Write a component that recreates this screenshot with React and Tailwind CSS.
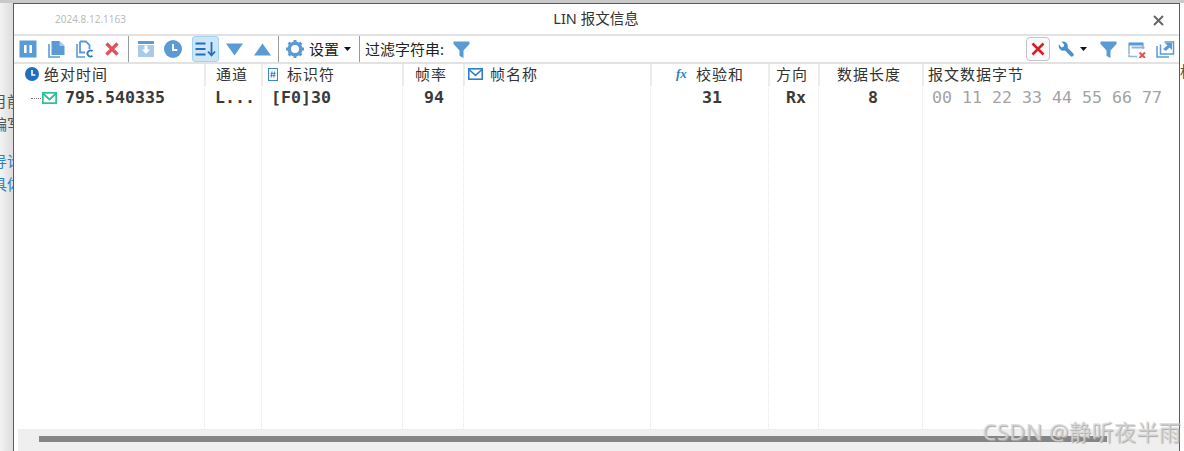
const cjk = '"Noto Sans", "Noto Sans CJK SC", sans-serif';
const mono = '"DejaVu Sans Mono", "Noto Sans CJK SC", monospace';

const GRID = 'grid grid-cols-[190px_57px_141px_61px_187px_118px_50px_104px_1fr]';

function Icon({ w = 18, h = 18, children, className = '' }) {
  return (
    <svg width={w} height={h} viewBox={`0 0 ${w} ${h}`} className={`shrink-0 ${className}`}>
      {children}
    </svg>
  );
}

function Pause() {
  return (
    <Icon>
      <rect x="0.5" y="0.5" width="17" height="17" fill="#5b9bd5" />
      <rect x="5" y="5" width="2.6" height="8" fill="#fff" />
      <rect x="10.4" y="5" width="2.6" height="8" fill="#fff" />
    </Icon>
  );
}

function Docs() {
  return (
    <Icon>
      <path d="M1 4v13h11" fill="none" stroke="#5b9bd5" strokeWidth="1.6" />
      <path d="M3.5 1h8l5 5v9h-13z" fill="#5b9bd5" />
      <path d="M11.5 1v5h5" fill="#a9cbe9" />
    </Icon>
  );
}

function DocC() {
  return (
    <Icon>
      <path d="M1 4v13h8" fill="none" stroke="#5b9bd5" strokeWidth="1.6" />
      <path d="M4 1.5h6l3.5 3.5v4M4 1.5v11h5" fill="none" stroke="#5b9bd5" strokeWidth="1.8" />
      <path d="M16.5 11.2a3 3 0 1 0 0 4.6" fill="none" stroke="#2d7cc4" strokeWidth="1.8" />
    </Icon>
  );
}

function RedX({ color = '#e0525a', sw = 3.2 }) {
  return (
    <Icon w={14} h={14}>
      <path d="M1.5 1.5l11 11M12.5 1.5l-11 11" stroke={color} strokeWidth={sw} />
    </Icon>
  );
}

function Save() {
  return (
    <Icon>
      <rect x="1" y="1" width="16" height="3" fill="#5b9bd5" />
      <rect x="1" y="5" width="16" height="12" fill="#a9cbe9" />
      <path d="M7.4 5.5h3.2v4h2.4L9 14 5 9.5h2.4z" fill="#fff" />
    </Icon>
  );
}

function Clock({ size = 18, color = '#5b9bd5' }) {
  const c = size / 2;
  return (
    <Icon w={size} h={size}>
      <circle cx={c} cy={c} r={c} fill={color} />
      <path d={`M${c} ${size * 0.22}V${c + 1}H${size * 0.74}`} fill="none" stroke="#fff" strokeWidth={size / 9} />
    </Icon>
  );
}

function SortDown() {
  return (
    <Icon w={22} h={16}>
      <path d="M0.5 2.5h10M0.5 8h10M0.5 13.5h10" stroke="#1f6fbd" strokeWidth="2" />
      <path d="M16.5 1v13M13 10.5l3.5 4 3.5-4" fill="none" stroke="#1f6fbd" strokeWidth="1.8" />
    </Icon>
  );
}

function Triangle({ up }) {
  return (
    <Icon w={17} h={13}>
      <path d={up ? 'M8.5 0.5L17 12.5H0z' : 'M0 0.5H17L8.5 12.5z'} fill="#5b9bd5" />
    </Icon>
  );
}

function Gear() {
  return (
    <Icon>
      <circle cx="9" cy="9" r="5.8" fill="none" stroke="#5b9bd5" strokeWidth="3.6" />
      <path
        d="M9 0v3M9 15v3M0 9h3M15 9h3M2.6 2.6l2.2 2.2M13.2 13.2l2.2 2.2M15.4 2.6l-2.2 2.2M4.8 13.2l-2.2 2.2"
        stroke="#5b9bd5"
        strokeWidth="3"
      />
    </Icon>
  );
}

function Caret() {
  return (
    <Icon w={7} h={4}>
      <path d="M0 0h7L3.5 4z" fill="#111" />
    </Icon>
  );
}

function Funnel() {
  return (
    <Icon w={17} h={17}>
      <path d="M0.5 0.5h16v2.5L10.5 9.5V17l-4-2V9.5L0.5 3z" fill="#5b9bd5" />
    </Icon>
  );
}

function Wrench() {
  return (
    <Icon w={16} h={16}>
      <path
        d="M1 3.2a4.8 4.8 0 0 0 6 6.2l5.4 5.6a1.9 1.9 0 0 0 2.7-2.7L9.6 6.8A4.8 4.8 0 0 0 3.4 0.8l2.8 2.8-0.6 2.2-2.2 0.6z"
        fill="#4a90d0"
      />
    </Icon>
  );
}

function WindowX() {
  return (
    <Icon h={17}>
      <path d="M1 13V2.5h14V8M1 13.5v2h8" fill="none" stroke="#8db8de" strokeWidth="1.6" />
      <rect x="1" y="1.5" width="14" height="3" fill="#5b9bd5" />
      <rect x="3.5" y="5.5" width="13" height="2" fill="#8db8de" />
      <path d="M11.5 11.5l5.5 5.5M17 11.5L11.5 17" stroke="#e0525a" strokeWidth="2" />
    </Icon>
  );
}

function Popout() {
  return (
    <Icon w={19} h={18}>
      <path d="M1 6v11h12" fill="none" stroke="#5b9bd5" strokeWidth="1.5" />
      <path d="M4.5 4.5v9.5h13V2h-9" fill="none" stroke="#5b9bd5" strokeWidth="1.5" />
      <path d="M9 3h7v7zM7 9l5-4 2 2-4 4z" fill="#5b9bd5" />
    </Icon>
  );
}

function Mail({ color = '#2f7fc9', w = 15, h = 12, sw = 1.6 }) {
  return (
    <Icon w={w} h={h}>
      <rect x="0.8" y="0.8" width={w - 1.6} height={h - 1.6} fill="none" stroke={color} strokeWidth={sw} />
      <path d={`M1 1.5L${w / 2} ${h * 0.62}L${w - 1} 1.5`} fill="none" stroke={color} strokeWidth={sw} />
    </Icon>
  );
}

function IdIcon() {
  return (
    <Icon w={10} h={13}>
      <rect x="0.5" y="0.5" width="9" height="12" fill="#f4f8fc" stroke="#3f86c8" />
      <path d="M4 3.5L3.2 9.5M6.6 3.5L5.8 9.5M2.6 5.4h5M2.4 7.6h5" stroke="#2f7fc9" strokeWidth="0.9" />
    </Icon>
  );
}

function Sep() {
  return <div className="w-px h-[26px] bg-[#9a9a9a] shrink-0" />;
}

const headers = [
  { label: '绝对时间', icon: <Clock size={14} color="#1f6fbd" />, cls: 'pl-[11px] gap-[5px]' },
  { label: '通道', cls: 'pl-[10px]' },
  { label: '标识符', icon: <IdIcon />, cls: 'pl-[5px] gap-[9px]' },
  { label: '帧率', cls: 'pl-[11px]' },
  { label: '帧名称', icon: <Mail w={15} h={12} />, cls: 'pl-[3px] gap-[7px]' },
  { label: '校验和', icon: <span className="w-[13px] text-[13px] font-bold italic text-[#2f7fc9] font-['Liberation_Serif'] tracking-normal">fx</span>, cls: 'pl-[24px] gap-[7px]' },
  { label: '方向', cls: 'pl-[6px]' },
  { label: '数据长度', cls: 'pl-[17px]' },
  { label: '报文数据字节', cls: 'pl-[4px]' },
];

const cells = [
  null,
  { text: 'L...', cls: 'pl-[10px]' },
  { text: '[F0]30', cls: 'pl-[9px]' },
  { text: '94', cls: 'pl-[21px]' },
  { text: '', cls: '' },
  { text: '31', cls: 'pl-[51px]' },
  { text: 'Rx', cls: 'pl-[17px]' },
  { text: '8', cls: 'pl-[49px]' },
];

const bytes = ['00', '11', '22', '33', '44', '55', '66', '77'];

export default function App() {
  return (
    <div className="relative flex flex-col w-[1184px] h-[451px] overflow-hidden bg-white" style={{ fontFamily: cjk }}>
      <div className="h-[3px] bg-[#c9c9c9] shrink-0" />
      <div className="flex flex-1 min-h-0">
        {/* what is behind the dialog on the left */}
        <div className="w-[13px] shrink-0 overflow-hidden bg-gradient-to-r from-[#f3f3f3] to-[#dcdcdc] pt-[87px] text-[15px] leading-[23px] whitespace-nowrap">
          <div className="-ml-[8px] w-[40px] text-[#555]">
            <div>月前</div>
            <div>编写</div>
            <div className="mt-[14px] text-[#2f7fc9]">导论</div>
            <div className="text-[#2f7fc9]">具体</div>
          </div>
        </div>

        {/* dialog */}
        <div className="flex flex-col w-[1167px] shrink-0 border-x border-t border-[#3c5f94] bg-white">
          <div className="relative flex items-center justify-center h-[32px] shrink-0 border-b-2 border-[#e2e2e2] text-[14.5px] text-[#333]">
            <span className="absolute left-[41px] top-[8px] text-[10px] text-[#bbb]">2024.8.12.1163</span>
            <span className="mr-[1px]">LIN 报文信息</span>
            <svg width="11" height="11" viewBox="0 0 11 11" className="absolute right-[15px] top-[11px]">
              <path d="M1 1l9 9M10 1l-9 9" stroke="#666" strokeWidth="2" />
            </svg>
          </div>

          <div className="flex items-center h-[28px] shrink-0 border-b-2 border-[#e2e2e2] text-[15px] text-[#222]">
            <div className="ml-[5px]"><Pause /></div>
            <div className="ml-[11px]"><Docs /></div>
            <div className="ml-[10px]"><DocC /></div>
            <div className="ml-[11px]"><RedX /></div>
            <div className="ml-[9px]"><Sep /></div>
            <div className="ml-[8px]"><Save /></div>
            <div className="ml-[9px]"><Clock /></div>
            <div className="ml-[10px] flex items-center justify-center w-[27px] h-[26px] rounded-[3px] bg-[#cde6f7] border border-[#a3d3f5]">
              <SortDown />
            </div>
            <div className="ml-[7px]"><Triangle /></div>
            <div className="ml-[11px]"><Triangle up /></div>
            <div className="ml-[7px]"><Sep /></div>
            <div className="ml-[7px]"><Gear /></div>
            <span className="ml-[5px]">设置</span>
            <div className="ml-[5px]"><Caret /></div>
            <div className="ml-[8px]"><Sep /></div>
            <span className="ml-[5px] whitespace-nowrap">过滤字符串:</span>
            <div className="ml-[9px]"><Funnel /></div>
            <div className="ml-auto flex items-center justify-center w-[24px] h-[24px] rounded-[4px] border border-[#c4c4c4] bg-[#fafafa]">
              <RedX color="#d81e28" sw={2.6} />
            </div>
            <div className="ml-[8px]"><Wrench /></div>
            <div className="ml-[6px]"><Caret /></div>
            <div className="ml-[13px]"><Funnel /></div>
            <div className="ml-[11px]"><WindowX /></div>
            <div className="ml-[10px] mr-[4px]"><Popout /></div>
          </div>

          <div className={`${GRID} h-[22px] shrink-0 text-[15px] leading-[20px] tracking-[1px] text-[#333]`}>
            {headers.map((h) => (
              <div key={h.label} className={`flex items-center pb-[2px] whitespace-nowrap overflow-hidden border-l-2 border-[#ececec] first:border-l-0 ${h.cls}`}>
                {h.icon}
                <span>{h.label}</span>
              </div>
            ))}
          </div>

          <div className={`${GRID} flex-1 min-h-0 text-[16.6px] leading-[24px] font-bold text-[#3a3a3a]`} style={{ fontFamily: mono }}>
            {cells.map((c, i) => (
              <div key={i} className="border-l border-dotted border-[#e8e8e8] first:border-l-0 whitespace-nowrap overflow-hidden">
                {c === null ? (
                  <div className="flex items-center h-[24px] pl-[17px]">
                    <div className="w-[10px] border-t border-dotted border-[#777] mr-[1px]" />
                    <Mail color="#2ec193" w={15} h={12} sw={1.8} />
                    <span className="ml-[8px]">795.540335</span>
                  </div>
                ) : (
                  <div className={c.cls}>{c.text}</div>
                )}
              </div>
            ))}
            <div className="pl-[9px] border-l border-dotted border-[#e8e8e8] font-normal text-[#a3a3a3] flex gap-[10px] whitespace-nowrap">
              {bytes.map((b) => (
                <span key={b} className="w-[20px]">{b}</span>
              ))}
            </div>
          </div>

          <div className="flex h-[22px] shrink-0 pl-[4px]">
            <div className="flex-1 bg-[#efefef] pt-[7px] pl-[21px] pr-[72px]">
              <div className="h-[6px] bg-[#858585]" />
            </div>
          </div>
        </div>

        {/* what is behind the dialog on the right */}
        <div className="flex-1 overflow-hidden pt-[58px] text-[15px] leading-[20px] text-[#555] whitespace-nowrap">
          <div className="w-[20px]">标</div>
        </div>
      </div>

      <div className="absolute right-[3px] top-[416px] text-[22px] leading-[30px] tracking-[0.4px] text-[#d8d8d8]/80 [text-shadow:1px_1px_1px_#a8a8a8]">
        CSDN @静听夜半雨
      </div>
    </div>
  );
}
